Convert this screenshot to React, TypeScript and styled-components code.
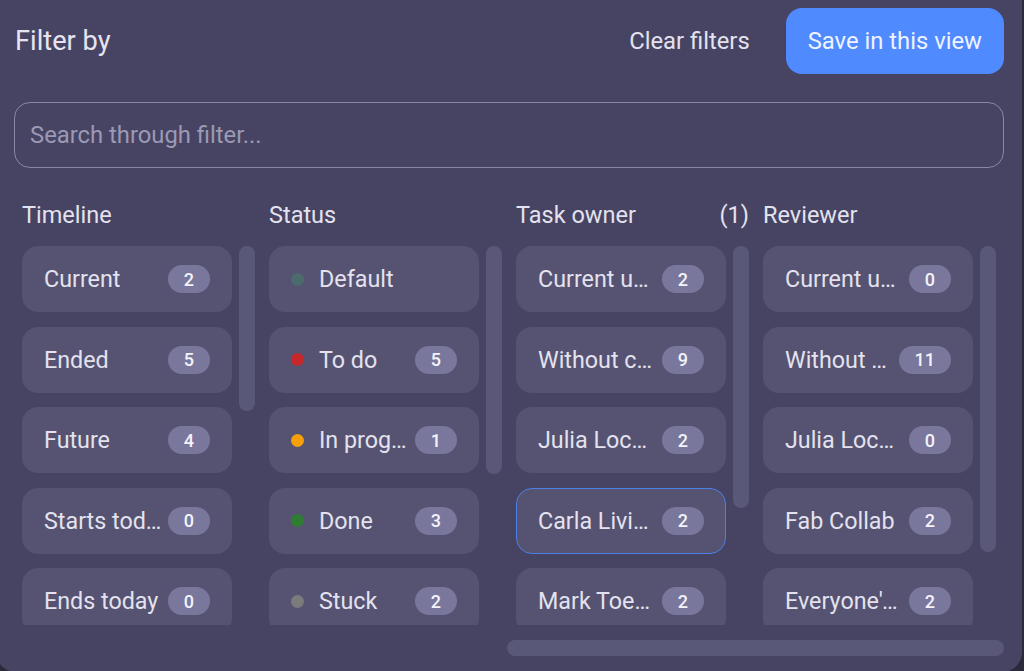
import React from "react";
import styled, { createGlobalStyle } from "styled-components";

const GlobalStyle = createGlobalStyle`
  html, body {
    margin: 0;
    padding: 0;
    background: #2b2a3b;
    overflow: hidden;
  }
  * { box-sizing: border-box; }
  body {
    font-family: Roboto, "Noto Sans", Arial, sans-serif;
    color: #e4e2ee;
  }
`;

const Panel = styled.div`
  margin-left: -4px;
  width: 1026px;
  height: 672px;
  background: #464462;
  border-radius: 0 0 20px 20px;
  padding: 8px 18px 0 18px;
  display: flex;
  flex-direction: column;
  overflow: hidden;
`;

const Header = styled.div`
  display: flex;
  align-items: center;
  height: 66px;
`;

const Title = styled.div`
  flex: 1;
  font-size: 27.2px;
  padding-left: 1px;
  margin-top: -1px;
  color: #e6e4f0;
`;

const ClearButton = styled.button`
  background: none;
  border: none;
  font-family: inherit;
  font-size: 23.8px;
  color: #e4e2ee;
  margin-right: 36px;
  padding: 0;
`;

const SaveButton = styled.button`
  height: 66px;
  padding: 0 22px;
  border: none;
  border-radius: 16px;
  background: #4f8aff;
  color: #eef3ff;
  font-family: inherit;
  font-size: 23.8px;
`;

const Search = styled.input`
  margin-top: 28px;
  height: 66px;
  width: 100%;
  border: 1px solid #8a87a6;
  border-radius: 16px;
  background: transparent;
  padding: 0 15px;
  font-family: inherit;
  font-size: 23.8px;
  color: #e4e2ee;
  outline: none;
  &::placeholder { color: #9c99b5; }
`;

const Columns = styled.div`
  margin-top: 33px;
  padding-left: 8px;
  display: grid;
  grid-template-columns: repeat(4, 233px);
  column-gap: 14px;
`;

const Column = styled.div`
  display: flex;
  flex-direction: column;
`;

const ColumnHead = styled.div`
  height: 28px;
  display: flex;
  justify-content: space-between;
  align-items: center;
  font-size: 23.5px;
  color: #e4e2ee;
  margin-bottom: 17px;
`;

const ColumnBody = styled.div`
  display: flex;
  gap: 7px;
  height: 379px;
  overflow: hidden;
`;

const List = styled.div`
  width: 210px;
  display: flex;
  flex-direction: column;
  gap: 14.5px;
  flex-shrink: 0;
`;

const ScrollThumb = styled.div<{ $h: number }>`
  width: 16px;
  height: ${(p) => p.$h}px;
  border-radius: 8px;
  background: #5a5878;
`;

const Card = styled.div<{ $selected?: boolean }>`
  height: 66px;
  flex-shrink: 0;
  border-radius: 16px;
  background: #555371;
  border: 1px solid ${(p) => (p.$selected ? "#4c80e6" : "transparent")};
  display: flex;
  align-items: center;
  padding: 0 21px;
  font-size: 23.3px;
  color: #e4e2ee;
`;

const Dot = styled.span<{ $c: string }>`
  width: 13px;
  height: 13px;
  border-radius: 50%;
  background: ${(p) => p.$c};
  flex-shrink: 0;
  margin-right: 15px;
`;

const Label = styled.span`
  flex: 1;
  min-width: 0;
  white-space: nowrap;
  overflow: hidden;
  text-overflow: ellipsis;
`;

const Badge = styled.span`
  flex-shrink: 0;
  margin-left: 6px;
  height: 28px;
  padding: 0 16px;
  border-radius: 14px;
  background: #7a779d;
  color: #f4f3fa;
  font-size: 18px;
  font-weight: 500;
  display: flex;
  align-items: center;
  justify-content: center;
`;

const HScroll = styled.div`
  margin-top: 15px;
  display: flex;
  justify-content: flex-end;
`;

const HThumb = styled.div`
  width: 497px;
  height: 16px;
  border-radius: 8px;
  background: #5a5878;
`;

type Item = { label: string; count?: number; dot?: string; selected?: boolean };
type Col = { title: string; extra?: string; thumb: number; items: Item[] };

const columns: Col[] = [
  {
    title: "Timeline",
    thumb: 165,
    items: [
      { label: "Current", count: 2 },
      { label: "Ended", count: 5 },
      { label: "Future", count: 4 },
      { label: "Starts today", count: 0 },
      { label: "Ends today", count: 0 },
    ],
  },
  {
    title: "Status",
    thumb: 228,
    items: [
      { label: "Default", dot: "#4d6b6d" },
      { label: "To do", count: 5, dot: "#c6282b" },
      { label: "In progress", count: 1, dot: "#f59f0b" },
      { label: "Done", count: 3, dot: "#2f7d32" },
      { label: "Stuck", count: 2, dot: "#7b7b7b" },
    ],
  },
  {
    title: "Task owner",
    extra: "(1)",
    thumb: 262,
    items: [
      { label: "Current user", count: 2 },
      { label: "Without caretaker", count: 9 },
      { label: "Julia Lockwood", count: 2 },
      { label: "Carla Livingston", count: 2, selected: true },
      { label: "Mark Toesen", count: 2 },
    ],
  },
  {
    title: "Reviewer",
    thumb: 306,
    items: [
      { label: "Current user", count: 0 },
      { label: "Without reviewer", count: 11 },
      { label: "Julia Lockwood", count: 0 },
      { label: "Fab Collab", count: 2 },
      { label: "Everyone's team", count: 2 },
    ],
  },
];

export default function App() {
  return (
    <>
      <GlobalStyle />
      <Panel>
        <Header>
          <Title>Filter by</Title>
          <ClearButton>Clear filters</ClearButton>
          <SaveButton>Save in this view</SaveButton>
        </Header>
        <Search placeholder="Search through filter..." />
        <Columns>
          {columns.map((col) => (
            <Column key={col.title}>
              <ColumnHead>
                <span>{col.title}</span>
                {col.extra && <span>{col.extra}</span>}
              </ColumnHead>
              <ColumnBody>
                <List>
                  {col.items.map((it) => (
                    <Card key={it.label} $selected={it.selected}>
                      {it.dot && <Dot $c={it.dot} />}
                      <Label>{it.label}</Label>
                      {it.count !== undefined && <Badge>{it.count}</Badge>}
                    </Card>
                  ))}
                </List>
                <ScrollThumb $h={col.thumb} />
              </ColumnBody>
            </Column>
          ))}
        </Columns>
        <HScroll>
          <HThumb />
        </HScroll>
      </Panel>
    </>
  );
}
